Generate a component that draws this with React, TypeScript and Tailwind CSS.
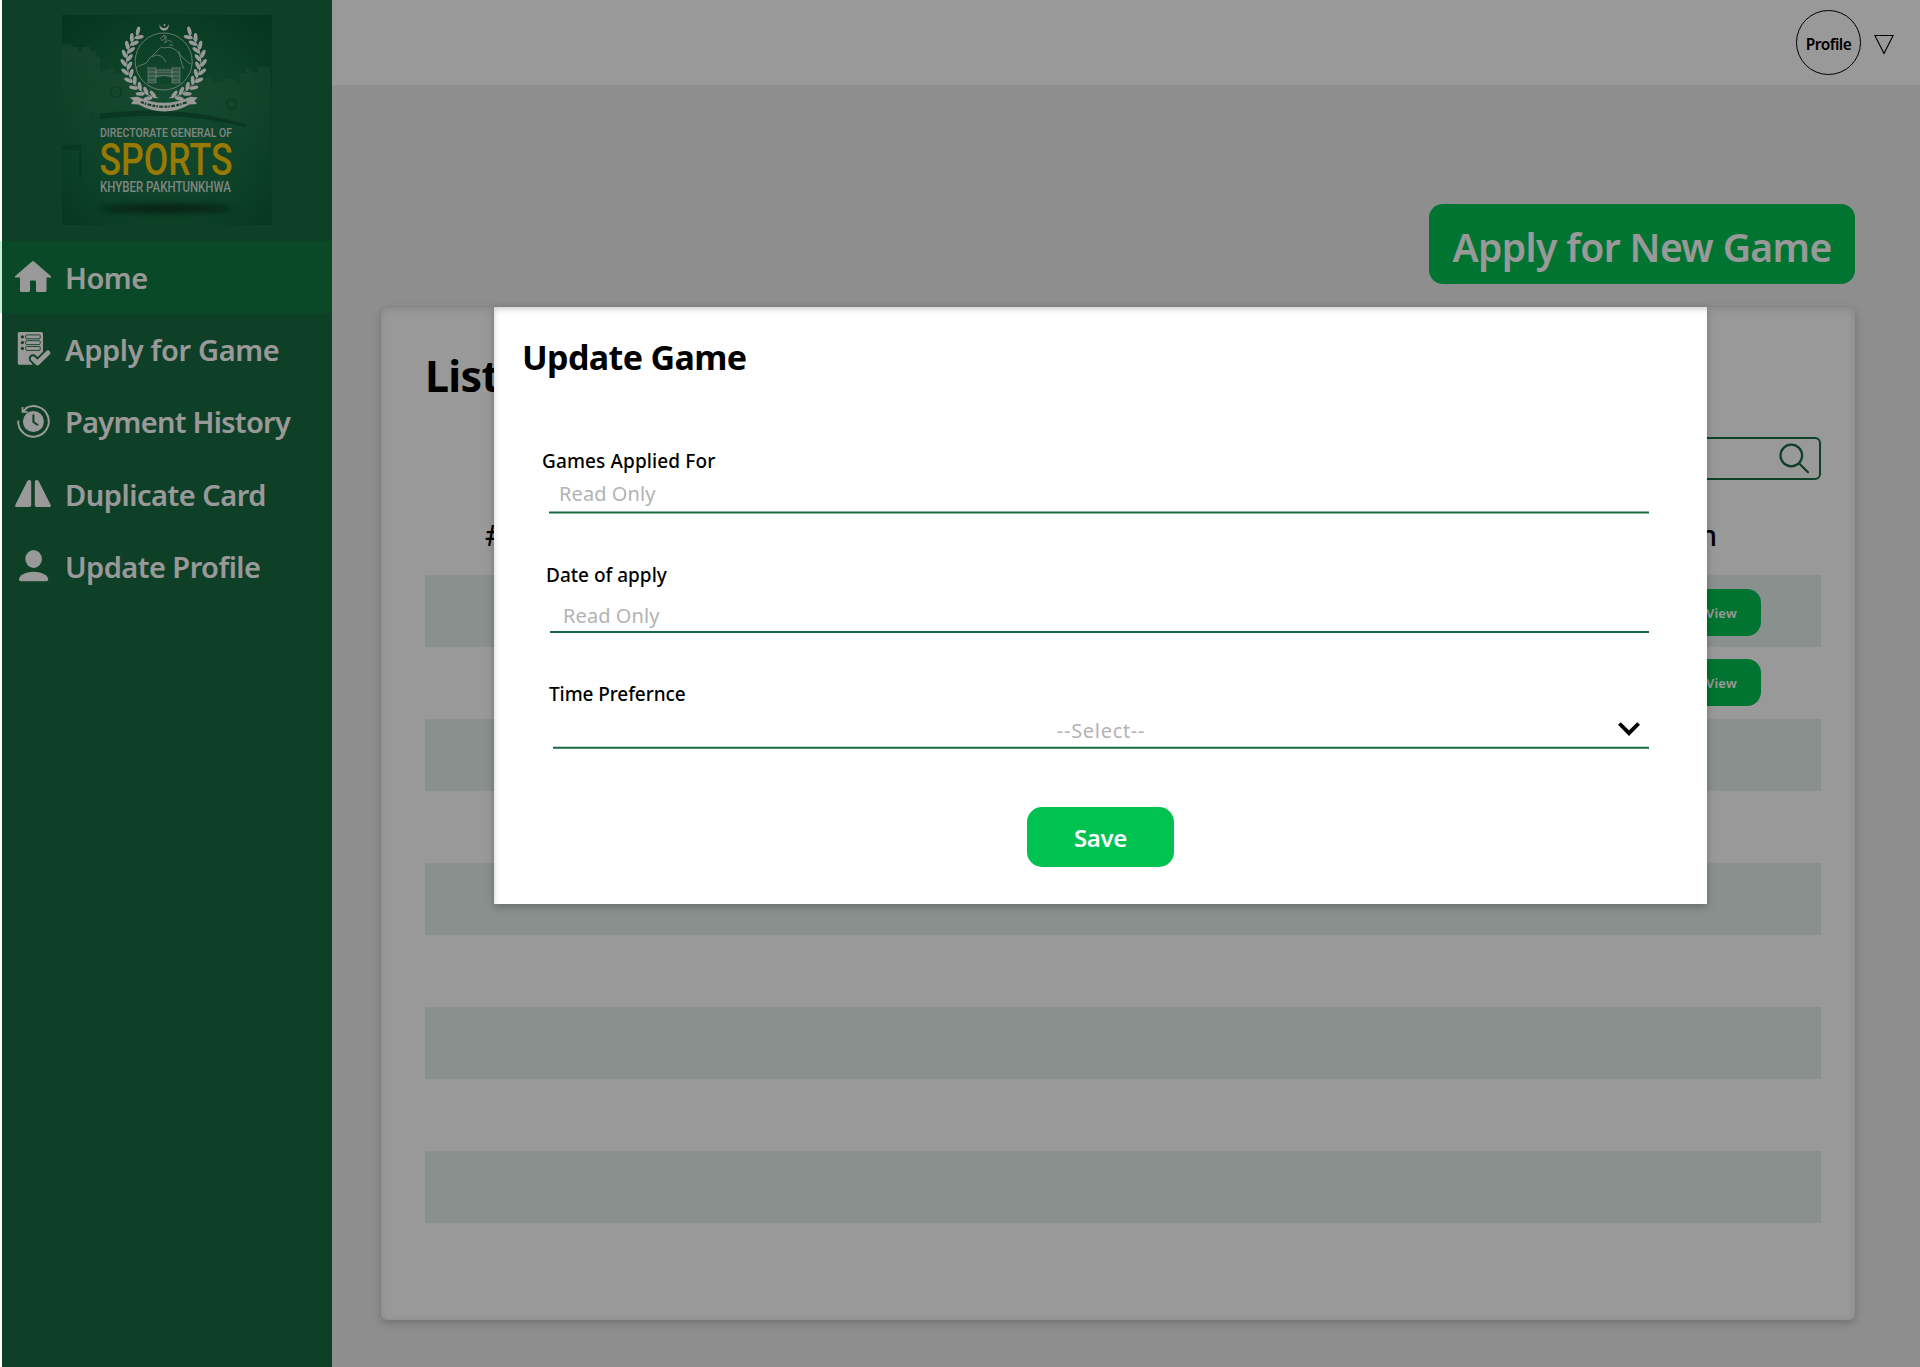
import React from "react";

const LIGHT = "#ffffff";
const GREEN = "#186941";

function Leaf({ angle, radius, tilt }: { angle: number; radius: number; tilt: number }) {
  const a = (angle * Math.PI) / 180;
  const x = 101.7 + radius * Math.cos(a);
  const y = 46.5 + radius * Math.sin(a);
  return <ellipse cx={x} cy={y} rx="4.5" ry="1.9" fill={LIGHT} transform={`rotate(${angle + tilt} ${x} ${y})`} />;
}

function Logo() {
  const right = [-50, -37, -24, -11, 2, 15, 28, 41, 54, 67];
  return (
    <svg viewBox="0 0 210 210" className="h-[210px] w-[210px]" fontFamily="Roboto, sans-serif">
      <defs>
        <radialGradient id="logoBg" cx="50%" cy="56%" r="72%">
          <stop offset="0" stopColor="#1f7a4c" />
          <stop offset="0.5" stopColor="#187045" />
          <stop offset="1" stopColor="#085a33" />
        </radialGradient>
        <linearGradient id="wall" x1="0" y1="0" x2="0" y2="1">
          <stop offset="0" stopColor="#4f8a66" stopOpacity="0.34" />
          <stop offset="1" stopColor="#3d8a5c" stopOpacity="0" />
        </linearGradient>
        <filter id="soft" x="-20%" y="-200%" width="140%" height="500%">
          <feGaussianBlur stdDeviation="3" />
        </filter>
      </defs>
      <rect width="210" height="210" fill="url(#logoBg)" />
      <path
        d="M0 29h10v3h6v4h4v-4h8v4h6v6h4v14h6v-2h8v5h8v-2h6v12h40v-2h34v-4h10v4h10v-3h12v4h6v-10h6v-4h6v4h6v-6h12v95h-33v-38q-75-22-147-10v50H0z"
        fill="url(#wall)"
      />
      <path d="M38 99c50-7 100-4 147 11l-2 2c-48-12-95-14-145-8z" fill="#0c5231" opacity="0.7" />
      <path d="M0 130h20v32h-3v-27H0z" fill="#0c5231" opacity="0.5" />
      <g fill="none" stroke="#0f5a36" strokeOpacity="0.7" strokeWidth="1.300">
        <circle cx="54" cy="77" r="5.500" />
        <circle cx="169.500" cy="89" r="5" />
      </g>
      <ellipse cx="104" cy="193.500" rx="66" ry="4" fill="#10351f" filter="url(#soft)" />

      <path d="M98 9a4.600 4.600 0 1 0 8.200 0a4 4 0 1 1-8.200 0z" fill={LIGHT} />
      <circle cx="102.500" cy="10" r="1" fill={LIGHT} />
      <circle cx="101.700" cy="46.500" r="28.500" fill="none" stroke={LIGHT} strokeWidth="0.8" opacity="0.8" />
      {right.map((a) => (
        <g key={a}>
          <Leaf angle={a} radius={40} tilt={-55} />
          <Leaf angle={a + 5} radius={34.5} tilt={-125} />
          <Leaf angle={180 - a} radius={40} tilt={55} />
          <Leaf angle={175 - a} radius={34.5} tilt={125} />
        </g>
      ))}
      <path d="M127 19a37.200 37.200 0 0 1-20 64M76.400 19a37.200 37.200 0 0 0 20 64" fill="none" stroke={LIGHT} strokeWidth="0.9" />
      <g fill="none" stroke={LIGHT} strokeWidth="0.8" opacity="0.75">
        <path d="M74 53c3-3 6-3 8-4 3-1 4-3 5-5 3-4 6-5 9-9 2-2 4-4 6-2 3-1 7-1 10 1 3 1 4 4 6 6 4 3 6 7 11 9M90 42c6-4 11-1 14 5M117 36c1 6 2 12 5 18" />
        <path d="M98 24c4-5 7-4 6 0s-2 5 0 3 5-2 6 1M102 20c2 3 0 6-3 5M107 30h4" />
      </g>
      <g stroke={LIGHT} strokeWidth="0.6" strokeOpacity="0.75" fill={LIGHT} fillOpacity="0.25">
        <path d="M86 53h8v15h-8zM110 53h8v15h-8zM94 55h16v3H94z" />
        <path d="M94 62q8-3 16 0v-2H94z" />
        <path d="M86 53v-1.500M90 53v-1.500M94 53v-1.500M98 55v-1.500M102 55v-1.500M106 55v-1.500M110 53v-1.500M114 53v-1.500M118 53v-1.500M86 57h8M86 61h8M86 65h8M110 57h8M110 61h8M110 65h8" />
      </g>
      <path d="M67.500 82.500l8-.8q26.500 12 53 0l7.500.8-3.500 3 2.500 3.500-7.500.5q-25 14-51 0l-7.500-.5 2.500-3.500z" fill={LIGHT} />
      <path d="M79 87q23 9.500 46 0" fill="none" stroke="#2a6b49" strokeWidth="2.200" strokeDasharray="3 1 1.500 1.300 4 1.200" />
      <text x="38" y="122" fontSize="13.700" fontWeight="500" textLength="132" lengthAdjust="spacingAndGlyphs" fill="#d2dfd8">
        DIRECTORATE GENERAL OF
      </text>
      <text x="37.500" y="160" fontSize="45" fontWeight="500" textLength="133" lengthAdjust="spacingAndGlyphs" fill="#fcca05">
        SPORTS
      </text>
      <text x="38" y="176.500" fontSize="14.300" fontWeight="500" textLength="131" lengthAdjust="spacingAndGlyphs" fill="#d2dfd8">
        KHYBER PAKHTUNKHWA
      </text>
    </svg>
  );
}

const HomeIcon = () => (
  <svg viewBox="13 259 40 36" className="h-9 w-10" fill={LIGHT}>
    <path d="M32 261.400q1-.9 2 0L51 276.300v1.200h-4.500v13q0 1.500-1.500 1.500h-7.500q-1.500 0-1.500-1.500v-9q0-1-1-1h-4q-1 0-1 1v9q0 1.500-1.500 1.500H21.500q-1.500 0-1.500-1.500v-13h-5v-1.200z" />
  </svg>
);

const ApplyIcon = () => (
  <svg viewBox="13 331 40 36" className="h-9 w-10" fill="none">
    <path d="M19 332h22.500q1.500 0 1.500 1.500v20L32 364.700H19q-1.200 0-1.200-1.200v-30q0-1.500 1.200-1.500z" fill={LIGHT} />
    <g fill={GREEN}>
      <circle cx="22.400" cy="336.800" r="1.600" />
      <circle cx="22.400" cy="342.600" r="1.600" />
      <circle cx="22.400" cy="348.400" r="1.600" />
    </g>
    <g stroke={GREEN} strokeWidth="0.9">
      <rect x="25.700" y="334.900" width="14.500" height="3.900" rx="1" />
      <rect x="25.700" y="340.700" width="14.500" height="3.900" rx="1" />
      <rect x="25.700" y="346.500" width="14.500" height="3.900" rx="1" />
    </g>
    <path d="M33 358.500l4.500 4.500L48 352.800" stroke={GREEN} strokeWidth="8.500" strokeLinecap="round" strokeLinejoin="round" />
    <path d="M33 358.700l4.500 4.300L48 352.800" stroke={LIGHT} strokeWidth="4.800" strokeLinecap="round" strokeLinejoin="round" />
  </svg>
);

const HistoryIcon = () => (
  <svg viewBox="13 403 40 36" className="h-9 w-10" fill="none">
    <path d="M18.200 420.500A15.300 15.300 0 1 0 25.200 408.500" stroke={LIGHT} strokeWidth="2" />
    <path d="M22.500 407v4.800h5" stroke={LIGHT} strokeWidth="1.800" />
    <path d="M22.500 411.500l4.500-3.500" stroke={LIGHT} strokeWidth="1.800" />
    <circle cx="33.400" cy="421.500" r="10.500" fill={LIGHT} />
    <path d="M33.400 415.200v6.800l4 2.800" stroke={GREEN} strokeWidth="2" strokeLinecap="round" />
  </svg>
);

const DuplicateIcon = () => (
  <svg viewBox="13 475 40 36" className="h-9 w-10" fill={LIGHT}>
    <path d="M29.500 480q1.700 0 1.700 1.700v23.600q0 1.700-1.700 1.700H16.200q-1.800 0-.9-1.900l11.900-23.800q.8-1.300 2.300-1.300zM36.500 480q-1.700 0-1.700 1.700v23.600q0 1.700 1.700 1.700h13.300q1.800 0 .9-1.900l-11.900-23.800q-.8-1.300-2.300-1.300z" />
  </svg>
);

const UserIcon = () => (
  <svg viewBox="13 547 40 36" className="h-9 w-10" fill={LIGHT}>
    <ellipse cx="33.600" cy="559" rx="8.300" ry="9" />
    <path d="M19 579.500c0-4 6-7.800 14.600-7.800s14.600 3.800 14.600 7.800q0 1.700-1.700 1.700H20.700q-1.700 0-1.700-1.700z" />
  </svg>
);

const NAV = [
  { label: "Home", icon: <HomeIcon />, row: "border-l-2 border-[#c4f0d6] bg-[#127b44] tracking-[-0.5px]", text: "" },
  { label: "Apply for Game", icon: <ApplyIcon />, row: "border-l-2 border-white bg-[#186941] tracking-[-0.33px]", text: "" },
  { label: "Payment History", icon: <HistoryIcon />, row: "border-l-2 border-white bg-[#186941] tracking-[-0.72px]", text: "" },
  { label: "Duplicate Card", icon: <DuplicateIcon />, row: "border-l-2 border-white bg-[#186941] tracking-[-0.48px]", text: "pt-[2px]" },
  { label: "Update Profile", icon: <UserIcon />, row: "border-l-2 border-white bg-[#186941] tracking-[-0.55px]", text: "pt-[2px]" },
];

const ROWS = [true, true, false, false, false, false, false, false, false];

function Sidebar() {
  return (
    <aside className="flex w-[332px] shrink-0 flex-col">
      <div className="h-[241px] border-l-2 border-white bg-[#186941] pl-[60px] pt-[15px]">
        <Logo />
      </div>
      <nav>
        {NAV.map((n) => (
          <a key={n.label} className={`flex h-[72px] items-center pl-[11px] text-[29px] font-semibold leading-none text-white ${n.row}`}>
            {n.icon}
            <span className={`ml-[12px] whitespace-nowrap ${n.text}`}>{n.label}</span>
          </a>
        ))}
      </nav>
      <div className="flex-1 border-l-2 border-white bg-[#186941]" />
    </aside>
  );
}

function Header() {
  return (
    <header className="flex h-[85px] shrink-0 items-start justify-end bg-white pr-[26px] pt-[10px]">
      <div className="flex h-[65px] w-[65px] items-center justify-center rounded-full border border-black">
        <span className="pt-[4px] text-[15.5px] font-semibold leading-none tracking-[-0.5px] text-black">Profile</span>
      </div>
      <svg viewBox="0 0 20 21" className="ml-[13px] mt-[24px] h-[21px] w-5" fill="none" stroke="#000" strokeWidth="1.100">
        <path d="M.9 1.500h18.200L10 19.500z" />
      </svg>
    </header>
  );
}

function GamesCard() {
  return (
    <section className="ml-[49px] mt-[23px] h-[1013px] w-[1474px] rounded-md bg-white pl-[44px] pr-[34px] shadow-[0_3px_8px_rgba(0,0,0,0.22),inset_0_2px_8px_rgba(0,0,0,0.12)]">
      <h2 className="h-[130px] pt-[45px] text-[43px] font-bold leading-[48px] tracking-[-0.7px] text-black">List of Games</h2>
      <div className="ml-auto flex h-[43px] w-[400px] items-center justify-end rounded-md border-2 border-[#186941] pr-[9px]">
        <svg viewBox="0 0 32 32" className="h-8 w-8" fill="none" stroke={GREEN} strokeWidth="2.200" strokeLinecap="round">
          <circle cx="13.300" cy="12.500" r="10.800" />
          <path d="M21 20.300l9 9" />
        </svg>
      </div>
      <div className="flex h-[95px] items-start justify-between pl-[60px] pr-[104px] pt-[35px] text-[28px] font-medium leading-[40px] text-black">
        <span>#</span>
        <span>Action</span>
      </div>
      {ROWS.map((hasAction, i) => (
        <div key={i} className={`flex h-[72px] justify-end pr-[60px] ${i % 2 ? "pt-[12px]" : "bg-[#e6f1ed] pt-[14px]"}`}>
          {hasAction && (
            <button className="flex h-[47px] w-[79px] items-center justify-center rounded-[14px] bg-[#00c251] pt-px text-[13px] font-semibold leading-none tracking-[0.2px] text-white">
              View
            </button>
          )}
        </div>
      ))}
    </section>
  );
}

function UpdateDialog() {
  return (
    <div className="ml-[492px] mt-[307px] h-[597px] w-[1213px] bg-white pl-[28px] pr-[58px] pt-[30px] text-black shadow-[0_3px_8px_rgba(0,0,0,0.24),inset_2px_4px_6px_-2px_rgba(0,0,0,0.2)]">
      <h1 className="text-[34px] font-bold leading-[40px] tracking-[-0.62px]">Update Game</h1>

      <div className="mt-[72px]">
        <label className="ml-[20px] block text-[19px] font-medium leading-[24px] tracking-[0.12px]">Games Applied For</label>
        <div className="ml-[27px] mt-[6px] h-[33px] pl-[10px] pt-px text-[20px] leading-[28px] tracking-[0.08px] text-[#b3b3b3]">Read Only</div>
        <div className="ml-[27px] h-px bg-[#186941] shadow-[0_-1px_0_rgba(24,105,65,0.5),0_1px_0_rgba(24,105,65,0.5)]" />
      </div>

      <div className="mt-[50px]">
        <label className="ml-[24px] block text-[19px] font-medium leading-[24px]">Date of apply</label>
        <div className="ml-[28px] mt-[14px] h-[32px] border-b-2 border-[#186941] pl-[13px] pt-px text-[20px] leading-[28px] tracking-[0.08px] text-[#b3b3b3]">
          Read Only
        </div>
      </div>

      <div className="mt-[49px]">
        <label className="ml-[27px] block text-[19px] font-medium leading-[24px] tracking-[-0.08px]">Time Prefernce</label>
        <div className="ml-[31px] mt-[10px] grid h-[31px] grid-cols-[1fr_auto_1fr] items-start text-[20px] leading-[28px] tracking-[0.7px] text-[#b3b3b3]">
          <span />
          <span className="pt-px">--Select--</span>
          <svg viewBox="0 0 24 16" className="mr-[8px] mt-[5px] h-4 w-6 justify-self-end" fill="none" stroke="#000" strokeWidth="3.900">
            <path d="M2.400 2.500L12 12.200l9.600-9.700" />
          </svg>
        </div>
        <div className="ml-[31px] h-px bg-[#186941] shadow-[0_-1px_0_rgba(24,105,65,0.25),0_1px_0_rgba(24,105,65,0.75)]" />
      </div>

      <button className="ml-[505px] mt-[59px] flex h-[60px] w-[147px] items-center justify-center rounded-[15px] bg-[#00c251] pt-px text-[24px] font-semibold leading-none tracking-[-0.3px] text-white">
        Save
      </button>
    </div>
  );
}

export default function App() {
  return (
    <div className="relative flex h-[1367px] w-[1920px] overflow-hidden bg-white font-['Noto_Sans',sans-serif]">
      <Sidebar />
      <main className="flex flex-1 flex-col bg-[#ededed]">
        <Header />
        <button className="ml-[1097px] mt-[119px] flex h-[80px] w-[426px] shrink-0 items-center justify-center whitespace-nowrap rounded-[14px] bg-[#00c251] pt-[5px] text-[39px] font-semibold leading-none tracking-[-0.6px] text-white">
          Apply for New Game
        </button>
        <GamesCard />
      </main>
      <div className="absolute inset-y-0 left-[2px] right-0 bg-black/40">
        <UpdateDialog />
      </div>
    </div>
  );
}
